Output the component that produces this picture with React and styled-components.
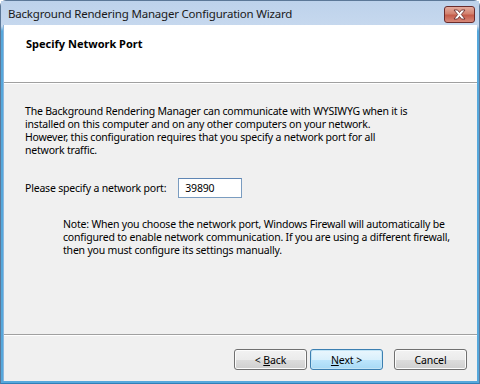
import React from 'react';
import styled, { createGlobalStyle } from 'styled-components';

const GlobalStyle = createGlobalStyle`
  html, body {
    margin: 0;
    padding: 0;
    width: 480px;
    height: 384px;
    overflow: hidden;
    background: #ffffff;
  }
  * { box-sizing: border-box; }
`;

const font = `'Noto Sans', 'Open Sans', sans-serif`;

const Window = styled.div`
  width: 480px;
  height: 384px;
  display: flex;
  flex-direction: column;
  background: linear-gradient(#bcd2ec, #c8daef 25px, #56a8dc 30px, #56a8dc);
  border: 1px solid #5c7898;
  border-bottom-color: #2f7fb8;
  border-radius: 6px 6px 0 0;
  padding: 0 2px 2px 2px;
  font-family: ${font};
  color: #000;
`;

const TitleBar = styled.div`
  height: 24px;
  display: flex;
  align-items: center;
  justify-content: space-between;
  background: linear-gradient(#bdd2eb, #c6d8ee);
  margin: 0 -2px;
  padding: 0 4px 0 7px;
`;

const Title = styled.span`
  font-size: 11.5px;
  color: #1a1a1a;
  letter-spacing: -0.2px;
`;

const CloseButton = styled.div`
  width: 31px;
  height: 17px;
  margin-top: 2px;
  border: 1px solid #6a2c2c;
  border-radius: 3px;
  background: linear-gradient(#e3ab9e, #d3826f 45%, #c45c4a 55%, #d8897a);
  display: flex;
  align-items: center;
  justify-content: center;
`;

const Client = styled.div`
  flex: 1;
  display: flex;
  flex-direction: column;
  background: #f0f0f0;
  border-left: 1px solid #8db6dc;
`;

const Header = styled.div`
  height: 58px;
  background: #ffffff;
  padding: 11px 0 0 22px;
  border-bottom: 1px solid #a0a0a0;
  box-shadow: 0 1px 0 #ffffff;
`;

const HeaderTitle = styled.div`
  font-size: 11px;
  font-weight: bold;
  letter-spacing: 0;
`;

const Body = styled.div`
  flex: 1;
  padding: 22px 10px 0 21px;
  font-size: 10.5px;
  line-height: 13px;
  letter-spacing: -0.2px;
  white-space: nowrap;
`;

const Paragraph = styled.p`
  margin: 0;
  padding-left: ${p => p.$indent || 0}px;
`;

const PortRow = styled.div`
  display: flex;
  align-items: center;
  gap: 12px;
  margin: 21px 0 20px 0;
`;

const PortInput = styled.input`
  width: 64px;
  height: 20px;
  border: 1px solid #7a9cc0;
  border-top-color: #5f86b4;
  background: #ffffff;
  padding: 0 6px;
  font-family: ${font};
  font-size: 10.5px;
  letter-spacing: -0.2px;
  color: #000;
  outline: none;
`;

const Footer = styled.div`
  height: 47px;
  border-top: 1px solid #a0a0a0;
  box-shadow: inset 0 1px 0 #ffffff;
  display: flex;
  justify-content: flex-end;
  align-items: flex-start;
  padding: 14px 10px 0 0;
`;

const Button = styled.button`
  width: 73px;
  height: 21px;
  margin-left: ${p => p.$gap || 3}px;
  border: 1px solid ${p => (p.$default ? '#3c7fb1' : '#707070')};
  border-radius: 3px;
  background: ${p =>
    p.$default
      ? 'linear-gradient(#eaf6fd, #d9f0fc 50%, #bee6fd 50%, #a7d9f5)'
      : 'linear-gradient(#f2f2f2, #ebebeb 50%, #dddddd 50%, #cfcfcf)'};
  box-shadow: inset 0 0 0 1px ${p => (p.$default ? '#c4e5f6' : '#fcfcfc')};
  font-family: ${font};
  font-size: 10.5px;
  letter-spacing: -0.1px;
  color: #000;
  padding: 0;
`;

const Key = styled.span`
  text-decoration: underline;
`;

export default function App() {
  return (
    <>
      <GlobalStyle />
      <Window>
        <TitleBar>
          <Title>Background Rendering Manager Configuration Wizard</Title>
          <CloseButton>
            <svg width="15" height="11" viewBox="0 0 15 11">
              <path
                d="M2 1 L5.5 1 L7.5 3.5 L9.5 1 L13 1 L9.3 5.5 L13 10 L9.5 10 L7.5 7.5 L5.5 10 L2 10 L5.7 5.5 Z"
                fill="#ffffff"
                stroke="#5a2222"
                strokeWidth="0.8"
              />
            </svg>
          </CloseButton>
        </TitleBar>
        <Client>
          <Header>
            <HeaderTitle>Specify Network Port</HeaderTitle>
          </Header>
          <Body>
            <Paragraph>
              The Background Rendering Manager can communicate with WYSIWYG when it is
              <br />
              installed on this computer and on any other computers on your network.
              <br />
              However, this configuration requires that you specify a network port for all
              <br />
              network traffic.
            </Paragraph>
            <PortRow>
              <span>Please specify a network port:</span>
              <PortInput defaultValue="39890" />
            </PortRow>
            <Paragraph $indent={38}>
              Note: When you choose the network port, Windows Firewall will automatically be
              <br />
              configured to enable network communication. If you are using a different firewall,
              <br />
              then you must configure its settings manually.
            </Paragraph>
          </Body>
          <Footer>
            <Button>
              &lt; <Key>B</Key>ack
            </Button>
            <Button $default>
              <Key>N</Key>ext &gt;
            </Button>
            <Button $gap={11}>Cancel</Button>
          </Footer>
        </Client>
      </Window>
    </>
  );
}
